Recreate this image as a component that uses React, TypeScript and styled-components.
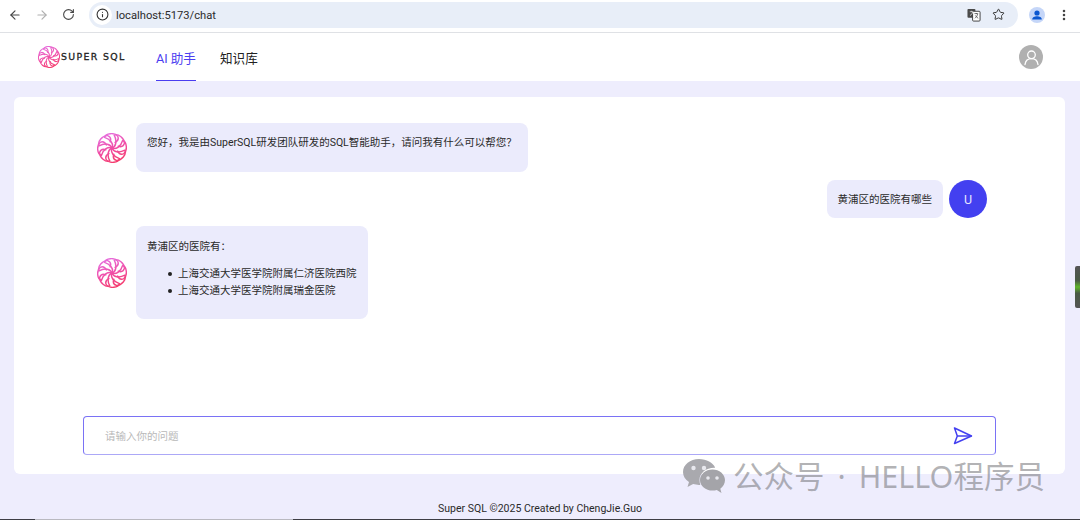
import React from 'react';
import styled, {createGlobalStyle} from 'styled-components';
import {ArrowLeft, ArrowRight, RotateCw, Info, Star, EllipsisVertical} from 'lucide-react';

const GlobalStyle = createGlobalStyle`
  html, body {
    margin: 0;
    padding: 0;
    height: 520px;
    overflow: hidden;
    background: #eeedfd;
    font-family: Roboto, "Noto Sans CJK SC", sans-serif;
  }
  * { box-sizing: border-box; }
`;

const Page = styled.div`
  position: relative;
  width: 1080px;
  height: 520px;
  display: flex;
  flex-direction: column;
  overflow: hidden;
  background: #eeedfd;
`;

// browser chrome
const Toolbar = styled.div`
  height: 33px;
  flex: none;
  display: flex;
  align-items: center;
  padding: 0 8px 3px 8px;
  background: #fff;
  border-bottom: 1px solid #dfe1e5;
`;
const NavIcons = styled.div`
  width: 81px;
  display: flex;
  align-items: center;
  gap: 13px;
  color: #474747;
`;
const AddressBar = styled.div`
  width: 929px;
  height: 26px;
  border-radius: 13px;
  background: #e8eef8;
  display: flex;
  align-items: center;
  padding: 0 13px 0 3px;
`;
const InfoBadge = styled.div`
  width: 20px;
  height: 20px;
  border-radius: 50%;
  background: #fff;
  display: flex;
  align-items: center;
  justify-content: center;
  color: #333;
`;
const Url = styled.div`
  margin-left: 4px;
  padding-top: 1px;
  flex: 1;
  font-size: 11.2px;
  color: #2c2c2c;
`;
const BarIcons = styled.div`
  display: flex;
  align-items: center;
  gap: 11px;
  color: #333;
`;
const ProfileArea = styled.div`
  flex: 1;
  display: flex;
  align-items: center;
  justify-content: space-between;
  padding: 0 1px 0 11px;
  color: #444;
`;

// app header
const Header = styled.header`
  height: 48px;
  flex: none;
  background: #fff;
  display: flex;
  align-items: stretch;
  padding: 0 37px 0 38px;
`;
const Logo = styled.div`
  width: 118px;
  display: flex;
  align-items: center;
  gap: 1px;
  padding-bottom: 1px;
`;
const LogoText = styled.span`
  font-family: "DejaVu Sans", sans-serif;
  font-size: 9.4px;
  letter-spacing: 1.35px;
  color: #222;
  -webkit-text-stroke: 0.3px #222;
  white-space: nowrap;
`;
const Menu = styled.nav`
  display: flex;
  gap: 24px;
`;
const MenuItem = styled.div<{$active?: boolean}>`
  display: flex;
  align-items: center;
  padding-top: 1px;
  font-size: 12.6px;
  color: ${p => (p.$active ? '#4a3df0' : '#222')};
  border-bottom: 1.5px solid ${p => (p.$active ? '#4a3df0' : 'transparent')};
`;
const UserCircle = styled.div`
  margin-left: auto;
  align-self: center;
  width: 24px;
  height: 24px;
  border-radius: 50%;
  background: #b0b0b0;
  display: flex;
  align-items: center;
  justify-content: center;
`;

// chat
const Main = styled.main`
  flex: none;
  height: 393px;
  padding: 16px 15px 0 14px;
`;
const Card = styled.section`
  height: 377px;
  background: #fff;
  border-radius: 6px;
  padding: 26px 69px 19px 69px;
  display: flex;
  flex-direction: column;
`;
const MessageList = styled.div`
  flex: 1;
  display: flex;
  flex-direction: column;
  gap: 8px;
  padding: 0 9px 0 14px;
`;
const Row = styled.div<{$user?: boolean}>`
  display: flex;
  align-items: center;
  gap: ${p => (p.$user ? '6px' : '9px')};
  justify-content: ${p => (p.$user ? 'flex-end' : 'flex-start')};
`;
const Bubble = styled.div`
  background: #ebebfc;
  border-radius: 8px;
  padding: 0 11px 0 11px;
  font-size: 10.5px;
  line-height: 16px;
  color: #2a2a2a;
`;
const Para = styled.p<{$top?: number; $bottom?: number}>`
  margin: ${p => p.$top ?? 12}px 0 ${p => p.$bottom ?? 10}px;
`;
const HospitalList = styled.ul`
  margin: 0 0 20px;
  padding-left: 21px;
  line-height: 17px;
  list-style: none;
`;
const HospitalItem = styled.li`
  display: flex;
  align-items: center;
  gap: 6px;
  &::before {
    content: '';
    width: 4px;
    height: 4px;
    border-radius: 50%;
    background: #222;
  }
`;
const UserAvatar = styled.div`
  width: 38px;
  height: 38px;
  border-radius: 50%;
  background: #4340f0;
  color: #e6e6ff;
  font-size: 12.5px;
  display: flex;
  align-items: center;
  justify-content: center;
`;
const InputBox = styled.div`
  height: 39px;
  flex: none;
  border: 1px solid #7a72f5;
  border-bottom-color: #aca8f7;
  border-radius: 4px;
  display: flex;
  align-items: center;
  padding: 0 22px 0 21px;
  background: #fff;
`;
const Placeholder = styled.span`
  flex: 1;
  font-size: 10.5px;
  color: #b9b9b9;
`;
const Footer = styled.footer`
  flex: 1;
  display: flex;
  align-items: flex-end;
  justify-content: center;
  padding-bottom: 3px;
  font-size: 10.5px;
  line-height: 14px;
  color: #2a2a2a;
`;
const BottomStrip = styled.div`
  height: 1px;
  flex: none;
  background: linear-gradient(to right, #3d3d44 35px, #b9b9c0 35px, #b9b9c0 293px, #3d3d44 293px);
`;

// things lying over the page
const SideWidget = styled.div`
  position: absolute;
  left: 1075px;
  top: 266px;
  width: 5px;
  height: 42px;
  border-radius: 2px 0 0 2px;
  background: linear-gradient(to bottom, #555 0%, #4a5a44 35%, #5fb52a 50%, #4a5a44 65%, #555 100%);
`;
const Watermark = styled.div`
  position: absolute;
  left: 683px;
  top: 458px;
  display: flex;
  align-items: center;
  gap: 8px;
  color: rgba(120, 120, 125, 0.56);
  font-family: "Noto Sans", "Noto Sans CJK SC", sans-serif;
  font-size: 30.5px;
  line-height: 36px;
  white-space: nowrap;
`;
const Dot = styled.span`
  margin: 0 13px;
`;

const petal = 'M0 0C3 -6 -2 -14 -12 -17C-10 -24 4 -25 9 -19C11 -15 9 -11 5 -9';

function rotatePetal(deg: number) {
  const a = (deg * Math.PI) / 180;
  return petal.replace(/(-?\d+) (-?\d+)/g, (_, x, y) => {
    const nx = +x * Math.cos(a) - +y * Math.sin(a);
    const ny = +x * Math.sin(a) + +y * Math.cos(a);
    return `${nx.toFixed(2)} ${ny.toFixed(2)}`;
  });
}

function Swirl({size, id}: {size: number; id: string}) {
  return (
    <svg width={size} height={size} viewBox="-24 -24 48 48" fill="none">
      <defs>
        <linearGradient id={id} gradientUnits="userSpaceOnUse" x1="-10" y1="-24" x2="8" y2="24">
          <stop offset="0" stopColor="#e56fe0"/>
          <stop offset="0.5" stopColor="#f04fa8"/>
          <stop offset="1" stopColor="#f53a68"/>
        </linearGradient>
      </defs>
      {[0, 45, 90, 135, 180, 225, 270, 315].map(d => (
        <path key={d} d={rotatePetal(d)} stroke={`url(#${id})`} strokeWidth={2.3} strokeLinejoin="round" strokeLinecap="round"/>
      ))}
    </svg>
  );
}

function TranslateIcon() {
  return (
    <svg width="14" height="14" viewBox="0 0 15 15">
      <rect x="0.5" y="1" width="8.5" height="9.5" rx="1" fill="#4a4a4a"/>
      <rect x="6" y="3.5" width="8" height="10.500" rx="1" fill="#fff" stroke="#3a3a3a" strokeWidth="1"/>
      <path d="M3 4h3.500M4.700 3v1M3.200 8c1.500-.6 2.600-2 3-4" stroke="#fff" strokeWidth=".7" fill="none"/>
      <path d="M8 6h4M10 5.500v1M11.500 6.500c-.5 2-1.500 3.500-3 4.500M9 8c.5 1 1.500 2 3 3" stroke="#333" strokeWidth=".7" fill="none"/>
    </svg>
  );
}

function ProfileIcon() {
  return (
    <svg width="16" height="16" viewBox="0 0 16 16">
      <circle cx="8" cy="8" r="8" fill="#c5d6f8"/>
      <circle cx="8" cy="6" r="2.600" fill="#0b57d0"/>
      <path d="M3.200 12.500c0-2.400 2.400-3.200 4.800-3.200s4.800.8 4.800 3.200z" fill="#0b57d0"/>
    </svg>
  );
}

function UserIcon() {
  return (
    <svg width="17" height="17" viewBox="0 0 17 17" fill="none" stroke="#fff" strokeWidth="1.300" strokeLinecap="round">
      <circle cx="8.500" cy="5.800" r="3.800"/>
      <path d="M2 15.500c.5-3.400 3-5.800 6.500-5.800s6 2.400 6.500 5.800"/>
    </svg>
  );
}

function SendIcon() {
  return (
    <svg width="20" height="20" viewBox="0 0 20 20" fill="none" stroke="#4340f0" strokeWidth="1.500" strokeLinejoin="round">
      <path d="M1.500 2 L18.500 10 L1.500 17.500 L4.300 10 Z"/>
      <path d="M4.300 10 H18.500"/>
    </svg>
  );
}

function WeChatIcon() {
  return (
    <svg width="42" height="34" viewBox="0 0 42 34">
      <path d="M16 0C7.200 0 0 5.600 0 13c0 4.200 2.300 7.700 6 10.100L4.500 28l5.600-2.900c1.900.5 3.800.8 5.900.8h1.300C16.800 24.300 16.500 22.700 16.500 21c0-6.900 6.500-12.300 14.700-12.300h1C30 3.600 23.600 0 16 0z" fill="#a9a9ae"/>
      <path d="M42 21c0-5.900-5.700-10.600-12.500-10.600S17 15.100 17 21s5.700 10.600 12.500 10.600c1.500 0 2.900-.2 4.300-.6L38.500 34l-1.200-4.200C40.100 27.800 42 24.600 42 21z" fill="#a4a4a9"/>
      <circle cx="10.500" cy="9" r="2.200" fill="#e8e8ee"/>
      <circle cx="21" cy="9" r="2.200" fill="#e8e8ee"/>
      <circle cx="25" cy="19" r="1.800" fill="#e8e8ee"/>
      <circle cx="34" cy="19" r="1.800" fill="#e8e8ee"/>
    </svg>
  );
}

export default function App() {
  return (
    <Page>
      <GlobalStyle/>
      <Toolbar>
        <NavIcons>
          <ArrowLeft size={14} strokeWidth={2}/>
          <ArrowRight size={14} strokeWidth={2} color="#b0b0b0"/>
          <RotateCw size={13} strokeWidth={2}/>
        </NavIcons>
        <AddressBar>
          <InfoBadge><Info size={13} strokeWidth={2}/></InfoBadge>
          <Url>localhost:5173/chat</Url>
          <BarIcons>
            <TranslateIcon/>
            <Star size={13} strokeWidth={1.8}/>
          </BarIcons>
        </AddressBar>
        <ProfileArea>
          <ProfileIcon/>
          <EllipsisVertical size={14} strokeWidth={2.4}/>
        </ProfileArea>
      </Toolbar>

      <Header>
        <Logo>
          <Swirl size={22} id="logo-grad"/>
          <LogoText>SUPER SQL</LogoText>
        </Logo>
        <Menu>
          <MenuItem $active>AI 助手</MenuItem>
          <MenuItem>知识库</MenuItem>
        </Menu>
        <UserCircle><UserIcon/></UserCircle>
      </Header>

      <Main>
        <Card>
          <MessageList>
            <Row>
              <Swirl size={30} id="bot-grad-1"/>
              <Bubble>
                <Para $bottom={21}>您好，我是由SuperSQL研发团队研发的SQL智能助手，请问我有什么可以帮您？</Para>
              </Bubble>
            </Row>
            <Row $user>
              <Bubble><Para>黄浦区的医院有哪些</Para></Bubble>
              <UserAvatar>U</UserAvatar>
            </Row>
            <Row>
              <Swirl size={30} id="bot-grad-2"/>
              <Bubble>
                <Para $top={13}>黄浦区的医院有：</Para>
                <HospitalList>
                  <HospitalItem>上海交通大学医学院附属仁济医院西院</HospitalItem>
                  <HospitalItem>上海交通大学医学院附属瑞金医院</HospitalItem>
                </HospitalList>
              </Bubble>
            </Row>
          </MessageList>
          <InputBox>
            <Placeholder>请输入你的问题</Placeholder>
            <SendIcon/>
          </InputBox>
        </Card>
      </Main>

      <Footer>Super SQL ©2025 Created by ChengJie.Guo</Footer>
      <BottomStrip/>

      <SideWidget/>
      <Watermark>
        <WeChatIcon/>
        <span>公众号<Dot>·</Dot>HELLO程序员</span>
      </Watermark>
    </Page>
  );
}
